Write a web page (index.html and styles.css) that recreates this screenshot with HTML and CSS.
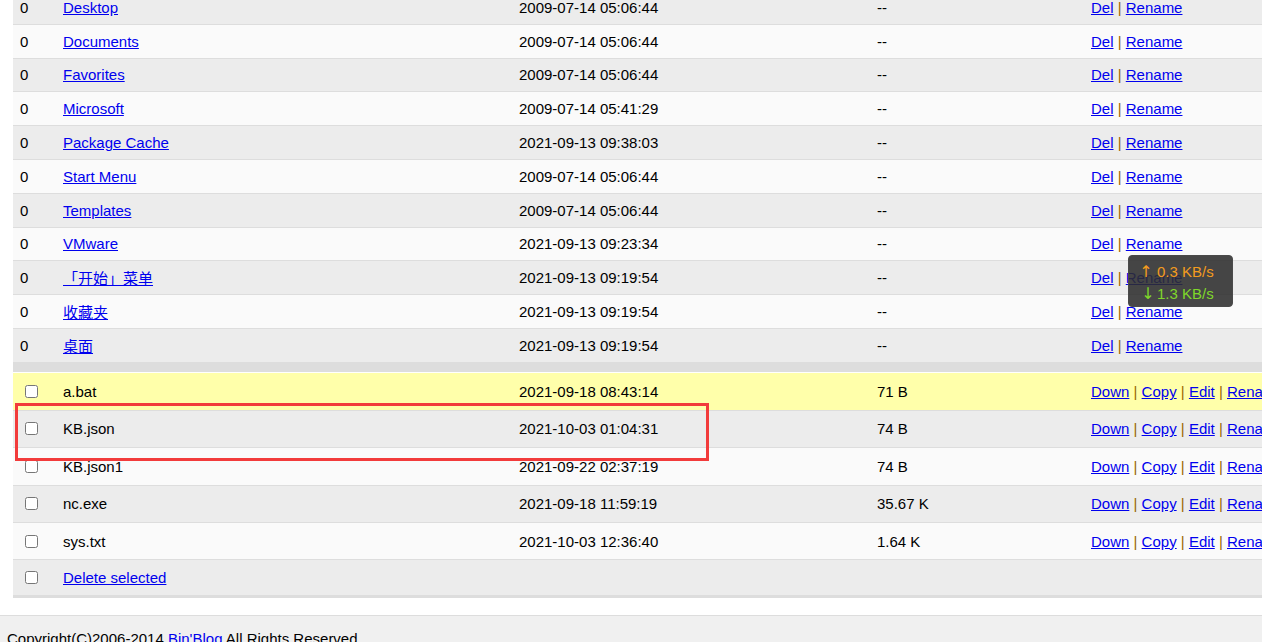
FILE: index.html
```html
<!DOCTYPE html>
<html lang="en">
<head>
    <meta charset="UTF-8">
    <meta name="viewport" content="width=device-width, initial-scale=1.0">
    <link rel="stylesheet" href="styles.css">
</head>
<body>

	<div class="page">
		<table class="file-list">
			<colgroup>
				<col class="c-num"><col class="c-name"><col class="c-time"><col class="c-size"><col class="c-act">
			</colgroup>
			<!-- 폴더 -->
			<tr class="dir odd"><td>0</td><td><a href="#">Desktop</a></td><td>2009-07-14 05:06:44</td><td>--</td><td class="act"><a href="#">Del</a> <span>|</span> <a href="#">Rename</a></td></tr>
			<tr class="dir"><td>0</td><td><a href="#">Documents</a></td><td>2009-07-14 05:06:44</td><td>--</td><td class="act"><a href="#">Del</a> <span>|</span> <a href="#">Rename</a></td></tr>
			<tr class="dir odd"><td>0</td><td><a href="#">Favorites</a></td><td>2009-07-14 05:06:44</td><td>--</td><td class="act"><a href="#">Del</a> <span>|</span> <a href="#">Rename</a></td></tr>
			<tr class="dir"><td>0</td><td><a href="#">Microsoft</a></td><td>2009-07-14 05:41:29</td><td>--</td><td class="act"><a href="#">Del</a> <span>|</span> <a href="#">Rename</a></td></tr>
			<tr class="dir odd"><td>0</td><td><a href="#">Package Cache</a></td><td>2021-09-13 09:38:03</td><td>--</td><td class="act"><a href="#">Del</a> <span>|</span> <a href="#">Rename</a></td></tr>
			<tr class="dir"><td>0</td><td><a href="#">Start Menu</a></td><td>2009-07-14 05:06:44</td><td>--</td><td class="act"><a href="#">Del</a> <span>|</span> <a href="#">Rename</a></td></tr>
			<tr class="dir odd"><td>0</td><td><a href="#">Templates</a></td><td>2009-07-14 05:06:44</td><td>--</td><td class="act"><a href="#">Del</a> <span>|</span> <a href="#">Rename</a></td></tr>
			<tr class="dir"><td>0</td><td><a href="#">VMware</a></td><td>2021-09-13 09:23:34</td><td>--</td><td class="act"><a href="#">Del</a> <span>|</span> <a href="#">Rename</a></td></tr>
			<tr class="dir odd"><td>0</td><td><a href="#">「开始」菜单</a></td><td>2021-09-13 09:19:54</td><td>--</td><td class="act"><a href="#">Del</a> <span>|</span> <a href="#">Rename</a></td></tr>
			<tr class="dir"><td>0</td><td><a href="#">收藏夹</a></td><td>2021-09-13 09:19:54</td><td>--</td><td class="act"><a href="#">Del</a> <span>|</span> <a href="#">Rename</a></td></tr>
			<tr class="dir odd"><td>0</td><td><a href="#">桌面</a></td><td>2021-09-13 09:19:54</td><td>--</td><td class="act"><a href="#">Del</a> <span>|</span> <a href="#">Rename</a></td></tr>

			<tr class="sep"><td colspan="5"></td></tr>

			<!-- 파일 -->
			<tr class="file hover"><td><input type="checkbox"></td><td>a.bat</td><td>2021-09-18 08:43:14</td><td>71 B</td><td class="act"><a href="#">Down</a> <span>|</span> <a href="#">Copy</a> <span>|</span> <a href="#">Edit</a> <span>|</span> <a href="#">Rename</a> <span>|</span> <a href="#">Time</a></td></tr>
			<tr class="file odd"><td><input type="checkbox"></td><td>KB.json</td><td>2021-10-03 01:04:31</td><td>74 B</td><td class="act"><a href="#">Down</a> <span>|</span> <a href="#">Copy</a> <span>|</span> <a href="#">Edit</a> <span>|</span> <a href="#">Rename</a> <span>|</span> <a href="#">Time</a></td></tr>
			<tr class="file"><td><input type="checkbox"></td><td>KB.json1</td><td>2021-09-22 02:37:19</td><td>74 B</td><td class="act"><a href="#">Down</a> <span>|</span> <a href="#">Copy</a> <span>|</span> <a href="#">Edit</a> <span>|</span> <a href="#">Rename</a> <span>|</span> <a href="#">Time</a></td></tr>
			<tr class="file odd"><td><input type="checkbox"></td><td>nc.exe</td><td>2021-09-18 11:59:19</td><td>35.67 K</td><td class="act"><a href="#">Down</a> <span>|</span> <a href="#">Copy</a> <span>|</span> <a href="#">Edit</a> <span>|</span> <a href="#">Rename</a> <span>|</span> <a href="#">Time</a></td></tr>
			<tr class="file"><td><input type="checkbox"></td><td>sys.txt</td><td>2021-10-03 12:36:40</td><td>1.64 K</td><td class="act"><a href="#">Down</a> <span>|</span> <a href="#">Copy</a> <span>|</span> <a href="#">Edit</a> <span>|</span> <a href="#">Rename</a> <span>|</span> <a href="#">Time</a></td></tr>
			<tr class="file odd last"><td><input type="checkbox"></td><td><a href="#">Delete selected</a></td><td></td><td></td><td></td></tr>
		</table>

		<div class="footer">Copyright(C)2006-2014 <a href="#">Bin'Blog</a> All Rights Reserved</div>
	</div>

	<!-- 스크린샷 표시 -->
	<div class="mark"></div>

	<!-- 네트워크 속도 -->
	<div class="speed">
		<div class="up"><i>↑</i>0.3 KB/s</div>
		<div class="down"><i>↓</i>1.3 KB/s</div>
	</div>

</body>
</html>
```

FILE: styles.css
```css
html, body {overflow: hidden; height: 100%;}
body {margin: 0; font-family: "Liberation Sans", Arial, "Noto Sans CJK SC", sans-serif; font-size: 15px; color: #000; background: #fff;}
a {color: #0000ee;}

/* 목록 */
.page {margin-top: -9px;}
.file-list {margin-left: 13px; width: 1500px; table-layout: fixed; border-collapse: collapse;}
.file-list .c-num {width: 43px;}
.file-list .c-name {width: 456px;}
.file-list .c-time {width: 358px;}
.file-list .c-size {width: 214px;}
.file-list td {padding: 0 7px; white-space: nowrap; overflow: hidden; background: #fafafa; border-bottom: 1px solid #ddd;}
.file-list tr.odd td {background: #ececec;}
.file-list tr.dir td {height: 32.8px;}
.file-list tr.file td {height: 36.4px;}
.file-list tr.hover td {background: #ffffaa;}
.file-list tr.last td {height: 34.3px; border-bottom: 3px solid #ddd;}
.file-list tr.sep td {height: 9.6px; padding: 0; background: #ddd; border-bottom: 1px solid #fff;}
.file-list .act span {color: #996600;}
.file-list input[type="checkbox"] {display: block; margin: 3px 3px 3px 5px;}

.footer {margin-top: 17px; padding: 14px 7px; border-top: 1px solid #ddd; background: #f0f0f0;}

/* 빨간 박스 */
.mark {position: absolute; left: 15px; top: 403px; width: 688px; height: 52px; border: 3px solid #f23b3b;}

/* 속도 표시 */
.speed {position: absolute; left: 1128px; top: 255px; width: 97px; height: 44px; padding: 5px 0 1px 6px; border-radius: 4px; border: 1px solid #4a4a4a; background: rgba(45, 45, 45, 0.88); font-size: 15px; line-height: 22px;}
.speed i {font-style: normal; font-family: "DejaVu Sans", sans-serif; font-size: 16px; display: inline-block; width: 22px; text-align: center;}
.speed .up {color: #f39c1e;}
.speed .down {color: #7fd72a;}
.speed .down i {padding-left: 4px; width: 18px;}
```
